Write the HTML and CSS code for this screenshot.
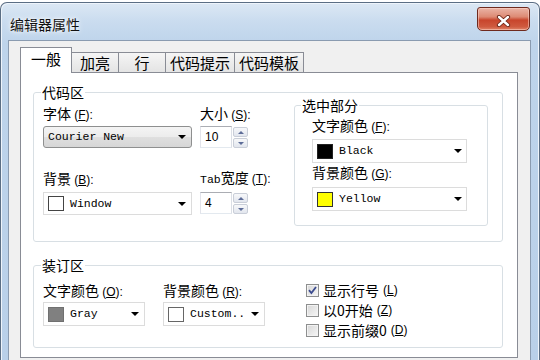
FILE: index.html
```html
<!DOCTYPE html>
<html lang="zh-CN">
<head>
<meta charset="utf-8">
<title>编辑器属性</title>
<link rel="stylesheet" href="styles.css">
</head>
<body>
<div class="window">
  <div class="titlebar">
    <div class="title">编辑器属性</div>
    <div class="close">
      <svg width="15" height="12" viewBox="0 0 15 12">
        <path d="M3 2 L12 10 M12 2 L3 10" stroke="#6a2416" stroke-width="4.2" stroke-linecap="round" fill="none"/>
        <path d="M3 2 L12 10 M12 2 L3 10" stroke="#ffffff" stroke-width="2.4" stroke-linecap="round" fill="none"/>
      </svg>
    </div>
  </div>
  <div class="client">
    <div class="tabs">
      <div class="tab active">一般</div>
      <div class="tab">加亮</div>
      <div class="tab">行</div>
      <div class="tab">代码提示</div>
      <div class="tab">代码模板</div>
    </div>
    <div class="panel">
      <fieldset class="group code">
        <legend>代码区</legend>
        <div class="code-grid">
          <div class="lbl a-fl">字体 <span class="mn">(<u>F</u>):</span></div>
          <div class="combo sys a-fc"><span class="mono">Courier New</span><span class="arrow"></span></div>
          <div class="lbl a-sl">大小 <span class="mn">(<u>S</u>):</span></div>
          <div class="spinbox a-sc">
            <div class="num">10</div>
            <div class="spin"><span class="sb up"></span><span class="sb down"></span></div>
          </div>
          <div class="lbl low a-bl">背景 <span class="mn">(<u>B</u>):</span></div>
          <div class="combo flat wide a-bc"><span class="sw white"></span><span class="mono">Window</span><span class="arrow"></span></div>
          <div class="lbl low a-tl"><span class="mono">Tab</span>宽度 <span class="mn">(<u>T</u>):</span></div>
          <div class="spinbox a-tc">
            <div class="num">4</div>
            <div class="spin"><span class="sb up"></span><span class="sb down"></span></div>
          </div>
          <fieldset class="group sel a-sel">
            <legend>选中部分</legend>
            <div class="sel-body">
              <div class="lbl">文字颜色 <span class="mn">(<u>F</u>):</span></div>
              <div class="combo flat mid first"><span class="sw black"></span><span class="mono">Black</span><span class="arrow"></span></div>
              <div class="lbl second">背景颜色 <span class="mn">(<u>G</u>):</span></div>
              <div class="combo flat mid third"><span class="sw yellow"></span><span class="mono">Yellow</span><span class="arrow"></span></div>
            </div>
          </fieldset>
        </div>
      </fieldset>
      <fieldset class="group bind">
        <legend>装订区</legend>
        <div class="bind-grid">
          <div class="lbl a-l1">文字颜色 <span class="mn">(<u>O</u>):</span></div>
          <div class="combo flat small a-c1"><span class="sw gray"></span><span class="mono">Gray</span><span class="arrow"></span></div>
          <div class="lbl a-l2">背景颜色 <span class="mn">(<u>R</u>):</span></div>
          <div class="combo flat small a-c2"><span class="sw white light"></span><span class="mono">Custom..</span><span class="arrow"></span></div>
          <div class="checks a-ck">
            <div class="check"><span class="cb"><svg width="11" height="11" viewBox="0 0 11 11"><path d="M2 5.2 L4.4 8 L9 2" stroke="#3b4b8f" stroke-width="1.8" fill="none"/></svg></span>显示行号 <span class="mn">(<u>L</u>)</span></div>
            <div class="check"><span class="cb"></span>以0开始 <span class="mn">(<u>Z</u>)</span></div>
            <div class="check"><span class="cb"></span>显示前缀0 <span class="mn">(<u>D</u>)</span></div>
          </div>
        </div>
      </fieldset>
    </div>
  </div>
</div>
</body>
</html>
```
FILE: styles.css
```css
* { box-sizing: border-box; }
html, body { margin: 0; padding: 0; }
body {
  width: 540px;
  height: 360px;
  overflow: hidden;
  background: #ffffff;
  font-family: "Noto Sans CJK SC", "Liberation Sans", sans-serif;
  font-size: 14px;
  line-height: 16px;
  color: #000;
}
.window {
  margin-top: 2px;
  height: 358px;
  border: 1px solid #5b6e84;
  border-bottom: none;
  border-radius: 7px 7px 0 0;
  background: linear-gradient(180deg, #dce8f4 0, #cadcef 18px, #bed4eb 40px, #b9d0e9 100%);
  box-shadow: inset 1px 1px 0 #eef4fb, inset -1px 0 0 #eef4fb;
  padding: 0 8px 0 7px;
  display: flex;
  flex-direction: column;
  overflow: hidden;
}
.titlebar {
  height: 37px;
  flex: none;
  display: flex;
  justify-content: space-between;
  align-items: flex-start;
}
.title {
  margin: 12px 0 0 2px;
  font-size: 14px;
  line-height: 18px;
  color: #111;
  text-shadow: 0 0 6px #fff, 0 0 3px #fff;
}
.close {
  width: 53px;
  height: 24px;
  margin: 4px 1px 0 0;
  border: 1px solid #6f2a1e;
  border-radius: 3px 3px 5px 5px;
  background: linear-gradient(180deg, #eab4a6 0%, #dd8a74 40%, #c8452c 55%, #cf5a3f 85%, #e0856a 100%);
  box-shadow: inset 0 0 0 1px rgba(255, 220, 210, 0.5);
  display: flex;
  align-items: center;
  justify-content: center;
  padding-top: 3px;
}
.client {
  flex: 1;
  border: 1px solid #8a9bb0;
  border-bottom: none;
  background: #f0f0f0;
  padding: 6px 12px 0 11px;
}
.tabs {
  display: flex;
  align-items: flex-end;
  height: 25px;
}
.tab {
  height: 20px;
  min-width: 47px;
  padding: 0 4px;
  border: 1px solid #898c95;
  border-left: none;
  border-bottom: none;
  background: linear-gradient(180deg, #f5f5f5, #e4e4e4);
  font-size: 15px;
  line-height: 19px;
  text-align: center;
  white-space: nowrap;
}
.tab.active {
  height: 26px;
  min-width: 52px;
  margin-bottom: -1px;
  border-left: 1px solid #898c95;
  background: #ffffff;
  line-height: 22px;
  position: relative;
  z-index: 1;
}
.panel {
  height: 286px;
  border: 1px solid #898c95;
  background: #ffffff;
  padding: 0 14px 0 12px;
}
fieldset.group {
  margin: 0;
  min-width: 0;
  border: 1px solid #d8dfe4;
  border-radius: 3px;
}
legend {
  padding: 0 1px;
  margin-left: -2px;
  font-size: 14px;
  line-height: 16px;
}
.group.code {
  margin-top: 11px;
  padding: 5px 8px 26px 9px;
}
.group.bind {
  margin-top: 15px;
  padding: 9px 8px 21px 9px;
}
.code-grid {
  display: grid;
  grid-template-columns: 157px 94px 194px;
  grid-template-rows: 21px 22px 44px 23px;
  grid-template-areas:
    "fl sl sel"
    "fc sc sel"
    "bl tl sel"
    "bc tc sel";
}
.a-fl { grid-area: fl; }
.a-fc { grid-area: fc; }
.a-sl { grid-area: sl; }
.a-sc { grid-area: sc; }
.a-bl { grid-area: bl; }
.a-bc { grid-area: bc; }
.a-tl { grid-area: tl; }
.a-tc { grid-area: tc; }
.a-sel { grid-area: sel; }
.lbl {
  white-space: nowrap;
  align-self: start;
}
.lbl.low {
  align-self: end;
  margin-bottom: 4px;
}
.mn {
  font-family: "Liberation Sans", sans-serif;
  font-size: 12px;
}
.mono {
  font-family: "Liberation Mono", monospace;
  font-size: 11.5px;
  white-space: nowrap;
}
.combo {
  display: flex;
  align-items: center;
  height: 22px;
  padding: 0 4px 0 4px;
}
.combo.sys {
  width: 149px;
  border: 1px solid #8e8f8f;
  border-radius: 3px;
  background: linear-gradient(180deg, #f4f4f4 0%, #ececec 50%, #dfdfdf 51%, #d6d6d6 100%);
  padding-right: 5px;
}
.combo.flat {
  height: 24px;
  border: 1px solid #dcdcdc;
  background: #ffffff;
}
.combo.wide { width: 149px; height: 23px; padding-right: 5px; }
.combo.mid { width: 155px; }
.combo.small { width: 102px; padding-right: 5px; }
.arrow {
  margin-left: auto;
  width: 0;
  height: 0;
  border-left: 4px solid transparent;
  border-right: 4px solid transparent;
  border-top: 4px solid #000;
}
.sw {
  flex: none;
  width: 16px;
  height: 15px;
  margin-right: 6px;
  border: 1px solid #222;
}
.sw.black { background: #000; }
.sw.yellow { background: #ffff00; border-color: #333; }
.sw.white { background: #fff; border-color: #444; }
.sw.white.light { border-color: #666; }
.sw.gray { background: #808080; border-color: #707070; }
.spinbox {
  display: flex;
  gap: 1px;
  align-self: start;
}
.num {
  width: 32px;
  height: 22px;
  border: 1px solid;
  border-color: #abadb3 #dbdfe6 #e3e9ef #e2e3ea;
  background: #fff;
  padding-left: 4px;
  font-family: "Liberation Sans", sans-serif;
  font-size: 12px;
  line-height: 20px;
}
.spin {
  display: flex;
  flex-direction: column;
  gap: 1px;
  width: 15px;
  margin-top: 1px;
}
.sb {
  height: 10px;
  border: 1px solid #c9ced8;
  border-radius: 2px;
  background: linear-gradient(180deg, #f7f8fa, #e2e6ee);
  display: flex;
  align-items: center;
  justify-content: center;
}
.sb.up::after {
  content: "";
  border-left: 3px solid transparent;
  border-right: 3px solid transparent;
  border-bottom: 3px solid #5d6c98;
}
.sb.down::after {
  content: "";
  border-left: 3px solid transparent;
  border-right: 3px solid transparent;
  border-top: 3px solid #5d6c98;
}
.group.sel {
  align-self: start;
  margin-top: -8px;
  height: 129px;
  padding: 4px 6px 0 6px;
}
.group.sel legend { margin-left: 0; }
.sel-body { padding-left: 11px; }
.sel-body .first { margin-top: 4px; }
.sel-body .second { margin-top: 1px; }
.sel-body .third { margin-top: 5px; }
.bind-grid {
  display: grid;
  grid-template-columns: 120px 143px 1fr;
  grid-template-rows: 20px 24px;
  grid-template-areas:
    "l1 l2 ck"
    "c1 c2 ck";
}
.a-l1 { grid-area: l1; }
.a-l2 { grid-area: l2; }
.a-c1 { grid-area: c1; }
.a-c2 { grid-area: c2; }
.a-ck { grid-area: ck; }
.checks {
  align-self: start;
  margin-top: -2px;
}
.check {
  display: flex;
  align-items: center;
  height: 20px;
  white-space: nowrap;
}
.check .mn { margin-left: 4px; }
.cb {
  flex: none;
  width: 13px;
  height: 13px;
  margin-right: 4px;
  border: 1px solid #8e8f8f;
  background: linear-gradient(135deg, #d6d6d6, #f7f7f7);
  box-shadow: inset 0 0 0 1px #f2f2f2;
  display: flex;
  align-items: center;
  justify-content: center;
}
```
